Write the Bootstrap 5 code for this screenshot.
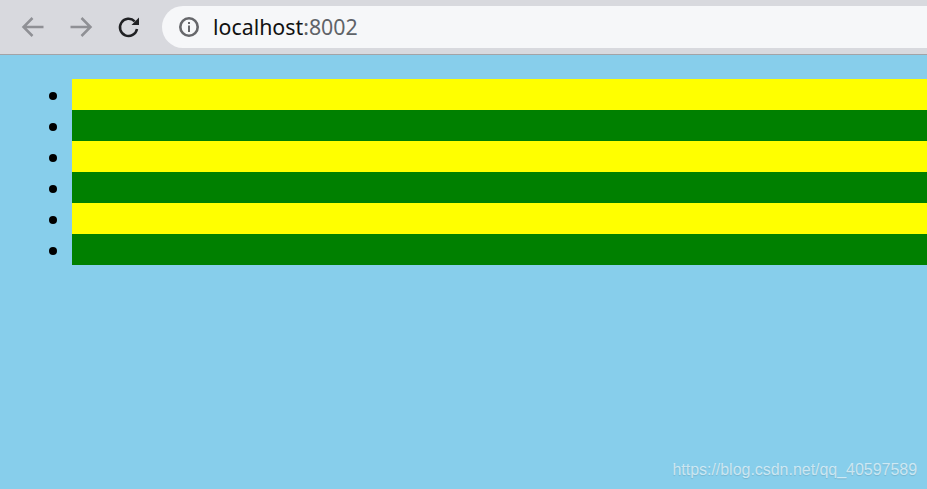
<!DOCTYPE html>
<html lang="en">
<head>
<meta charset="utf-8">
<title>localhost:8002</title>
<link rel="stylesheet" href="https://cdn.jsdelivr.net/npm/bootstrap@5.3.0/dist/css/bootstrap.min.css">
<style>
html, body { height: 100%; overflow: hidden; }
body { background: #87ceeb; font-family: "Liberation Sans", sans-serif; }
.chrome-bar { height: 55px; background: #d8d9de; border-bottom: 1px solid #a3a3a6; overflow: hidden; }
.nav-ico { width: 26px; height: 26px; flex: none; }
.btn-zone { height: 54px; padding-left: 20px; gap: 22px; width: 162px; }
.omni { height: 42px; flex: 1; margin-top: 6px; margin-right: -30px; background: #f6f7f9; border-radius: 21px 0 0 21px; padding-left: 17px; }
.url { font-family: "Noto Sans", sans-serif; font-size: 21.35px; margin-left: 14px; color: #111; line-height: 1; }
.url span { color: #5f6368; }
.stripes { list-style: disc; margin: 24px 0 0; padding: 0 0 0 72px; font-size: 28px; color: #000; }
.stripes li { height: 31px; line-height: 31px; }
.stripes li:nth-child(odd) { background: #ff0; }
.stripes li:nth-child(even) { background: #008000; }
.wm { position: absolute; right: 10px; bottom: 10px; font-size: 15.95px; line-height: 18px; color: rgba(255,255,255,.62); text-shadow: 0 1px 1px rgba(0,0,0,.12); }
</style>
</head>
<body class="position-relative">
<header class="chrome-bar d-flex align-items-start">
  <div class="btn-zone d-flex align-items-center flex-shrink-0">
    <svg class="nav-ico" viewBox="0 0 26 26" fill="none" stroke="#8f9095" stroke-width="2.500"><path d="M23.500 13H5M12.500 4 3.500 13l9 9"/></svg>
    <svg class="nav-ico" viewBox="0 0 26 26" fill="none" stroke="#8f9095" stroke-width="2.500"><path d="M2.500 13H21M13.500 4l9 9-9 9"/></svg>
    <svg class="nav-ico" viewBox="0 0 26 26" fill="none"><path d="M21 15a8.600 8.600 0 1 1-2.300-7.600" stroke="#202124" stroke-width="2.500"/><path d="M23 3.500V11h-7.500z" fill="#202124"/></svg>
  </div>
  <div class="omni d-flex align-items-center">
    <svg width="20" height="20" viewBox="0 0 20 20" fill="none"><circle cx="10" cy="10" r="8.700" stroke="#66676b" stroke-width="2.600"/><path d="M9 8.500h2V15H9zM9 5h2v2H9z" fill="#66676b"/></svg>
    <div class="url">localhost<span>:8002</span></div>
  </div>
</header>
<ul class="stripes">
  <li></li><li></li><li></li><li></li><li></li><li></li>
</ul>
<div class="wm">https://blog.csdn.net/qq_40597589</div>
</body>
</html>
